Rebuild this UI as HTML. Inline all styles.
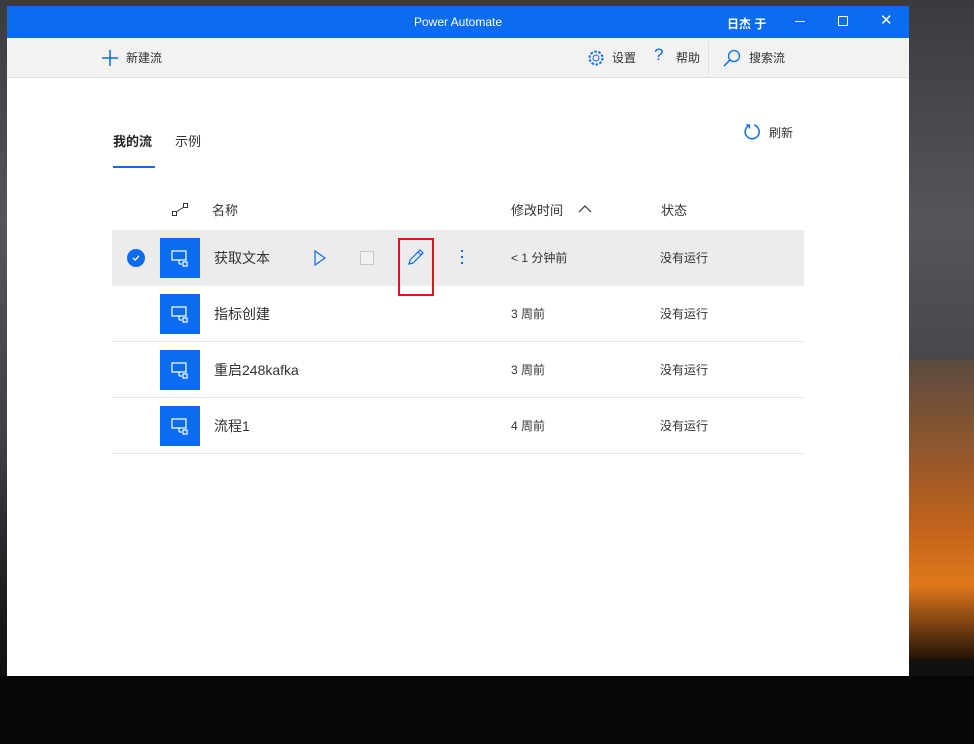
<!DOCTYPE html>
<html><head><meta charset="utf-8"><style>
*{margin:0;padding:0;box-sizing:border-box}
body{width:974px;height:744px;overflow:hidden;position:relative;font-family:"Liberation Sans","Noto Sans CJK SC",sans-serif;
background:linear-gradient(180deg,#3a3a40 0%,#55555c 30%,#3e3e44 60%,#1a1a1c 82%,#050505 100%);}
.orange{position:absolute;left:909px;top:360px;width:65px;height:300px;background:linear-gradient(180deg,#5a4a40 0%,#c0621c 55%,#e0781c 75%,#201208 100%)}
.mtn{position:absolute;left:0;top:676px;width:974px;height:68px;background:#060606}
.win{position:absolute;left:7px;top:6px;width:902px;height:670px;background:#fff}
.title{height:32px;background:#0b6cf0;color:#fff;font-size:12px;position:relative}
.title .t{position:absolute;left:0;right:0;top:9px;text-align:center}
.tb{position:absolute;top:0;color:#fff}
.bar{height:40px;background:#f3f2f1;border-bottom:1px solid #e1dfdd;position:relative;font-size:12px;color:#333}
.abs{position:absolute}
.txt{font-size:13px;color:#333}
.row{position:absolute;left:105px;width:692px;height:56px;border-bottom:1px solid #e6e6e6}
.ico{position:absolute;left:48px;top:8px;width:40px;height:40px;background:#0b6cf0}
.name{position:absolute;left:102px;top:18px;font-size:14px;color:#333}
.tm{position:absolute;left:399px;top:19px;font-size:12px;color:#333}
.st{position:absolute;left:548px;top:19px;font-size:12px;color:#333}
</style></head><body>
<div class="orange"></div><div class="mtn"></div>
<div class="win">
<div class="title"><div class="t">Power Automate</div>
<div class="tb" style="left:720px;top:9px;font-size:12px;font-weight:bold">日杰 于</div>
<div class="tb" style="left:788px;top:15px;width:10px;height:1px;background:#fff"></div>
<div class="tb" style="left:831px;top:10px;width:10px;height:10px;border:1px solid #fff"></div>
<div class="tb" style="left:873px;top:5px;font-size:15px">✕</div>
</div>
<div class="bar">
<svg class="abs" style="left:95px;top:12px" width="16" height="16"><path d="M8 0V16M0 8H16" stroke="#0b6cf0" stroke-width="1.5"/></svg>
<div class="abs" style="left:119px;top:11px">新建流</div>
<svg class="abs" style="left:580px;top:11px" width="18" height="18" viewBox="0 0 18 18"><circle cx="9" cy="9" r="3" fill="none" stroke="#0b6cf0"/><circle cx="9" cy="9" r="6.5" fill="none" stroke="#0b6cf0" stroke-dasharray="2.5 1.6" stroke-width="2"/></svg>
<div class="abs" style="left:605px;top:11px">设置</div>
<div class="abs" style="left:647px;top:7px;color:#0b6cf0;font-size:17px">?</div>
<div class="abs" style="left:669px;top:11px">帮助</div>
<div class="abs" style="left:701px;top:4px;width:1px;height:32px;background:#e1dfdd"></div>
<svg class="abs" style="left:716px;top:11px" width="18" height="18"><circle cx="11" cy="7" r="5.5" fill="none" stroke="#0b6cf0" stroke-width="1.3"/><path d="M7 11L1 17" stroke="#0b6cf0" stroke-width="1.5"/></svg>
<div class="abs" style="left:742px;top:11px">搜索流</div>
</div>
<div class="abs txt" style="left:106px;top:125px;font-weight:bold;color:#222">我的流</div>
<div class="abs" style="left:106px;top:160px;width:42px;height:2px;background:#0b6cf0"></div>
<div class="abs txt" style="left:168px;top:125px">示例</div>
<svg class="abs" style="left:736px;top:117px" width="18" height="18"><path d="M6 2.5A7 7 0 1 0 11 2" fill="none" stroke="#0b6cf0" stroke-width="1.5"/><path d="M3 2H6.5V5.5" fill="none" stroke="#0b6cf0" stroke-width="1.3"/></svg>
<div class="abs" style="left:762px;top:118px;font-size:12px;color:#333">刷新</div>
<svg class="abs" style="left:165px;top:197px" width="16" height="14"><rect x="0.5" y="8.5" width="4" height="4" fill="none" stroke="#333"/><rect x="11.5" y="0.5" width="4" height="4" fill="none" stroke="#333"/><path d="M4 9L12 4" stroke="#333"/></svg>
<div class="abs txt" style="left:205px;top:194px">名称</div>
<div class="abs txt" style="left:504px;top:194px">修改时间</div>
<svg class="abs" style="left:571px;top:199px" width="14" height="8"><path d="M1 7L7 1L13 7" fill="none" stroke="#333" stroke-width="1.2"/></svg>
<div class="abs txt" style="left:654px;top:194px">状态</div>

<div class="row" style="top:224px;background:#ececec;border-bottom:none">
<div class="abs" style="left:15px;top:19px;width:18px;height:18px;border-radius:50%;background:#0b6cf0"></div>
<svg class="abs" style="left:18px;top:22px" width="12" height="12"><path d="M3 6L5.2 8L9 4" fill="none" stroke="#fff" stroke-width="1.3"/></svg>
<div class="ico"></div><div class="name">获取文本</div>
<svg class="abs" style="left:202px;top:20px" width="12" height="16"><path d="M1 1L11 8L1 15Z" fill="none" stroke="#0b6cf0" stroke-width="1.2"/></svg>
<div class="abs" style="left:248px;top:21px;width:14px;height:14px;border:1px solid #c8c8c8;background:#f2f2f2"></div>
<svg class="abs" style="left:294px;top:17px" width="20" height="20"><path d="M3 17L4 13L14 3L17 6L7 16Z M12 5L15 8" fill="none" stroke="#0b6cf0" stroke-width="1.2"/></svg>
<div class="abs" style="left:349px;top:20px;width:2px;height:2px;background:#0b6cf0;box-shadow:0 6px 0 #0b6cf0,0 12px 0 #0b6cf0"></div>
<div class="tm">&lt; 1 分钟前</div><div class="st">没有运行</div>
</div>
<div class="abs" style="left:391px;top:232px;width:36px;height:58px;border:2px solid #e0141e"></div>
<div class="row" style="top:280px;border-top:none"><div class="ico"></div><div class="name">指标创建</div><div class="tm">3 周前</div><div class="st">没有运行</div></div>
<div class="row" style="top:336px"><div class="ico"></div><div class="name">重启248kafka</div><div class="tm">3 周前</div><div class="st">没有运行</div></div>
<div class="row" style="top:392px"><div class="ico"></div><div class="name">流程1</div><div class="tm">4 周前</div><div class="st">没有运行</div></div>
</div>
<svg style="position:absolute;left:0;top:0" width="974" height="744">
<g fill="none" stroke="#fff" stroke-width="1.2" transform="translate(4,-3)">
<path d="M168 254H182V263H168Z M175 263V267 M175 267H178 M179 265V269H183V265Z"/>
<path d="M168 310H182V319H168Z M175 319V323 M175 323H178 M179 321V325H183V321Z"/>
<path d="M168 366H182V375H168Z M175 375V379 M175 379H178 M179 377V381H183V377Z"/>
<path d="M168 422H182V431H168Z M175 431V435 M175 435H178 M179 433V437H183V433Z"/>
</g></svg>
</body></html>
